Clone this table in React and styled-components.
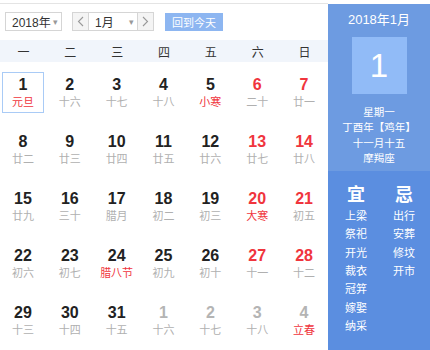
import React from 'react'
import styled, { createGlobalStyle } from 'styled-components'

const GlobalStyle = createGlobalStyle`
  html, body {
    margin: 0;
    padding: 0;
    background: #fff;
  }
  body {
    font-family: "Liberation Sans", "Noto Sans CJK SC", sans-serif;
  }
`

const weekdays = ['一', '二', '三', '四', '五', '六', '日']

const lunar = [
  '元旦', '十六', '十七', '十八', '小寒', '二十', '廿一',
  '廿二', '廿三', '廿四', '廿五', '廿六', '廿七', '廿八',
  '廿九', '三十', '腊月', '初二', '初三', '大寒', '初五',
  '初六', '初七', '腊八节', '初九', '初十', '十一', '十二',
  '十三', '十四', '十五', '十六', '十七', '十八', '立春'
]
const festivals = ['元旦', '小寒', '大寒', '腊八节', '立春']

const days = lunar.map((text, i) => {
  const inMonth = i < 31
  return {
    key: `day-${i}`,
    num: inMonth ? i + 1 : i - 30,
    text,
    inMonth,
    weekend: i % 7 >= 5,
    festival: festivals.includes(text),
    today: i === 0
  }
})

const yi = ['上梁', '祭祀', '开光', '裁衣', '冠笄', '嫁娶', '纳采']
const ji = ['出行', '安葬', '修坟', '开市']

const Chevron = ({ dir }) => (
  <svg width="7" height="11" viewBox="0 0 7 11">
    <path
      d={dir === 'left' ? 'M6 1 L1.5 5.5 L6 10' : 'M1 1 L5.5 5.5 L1 10'}
      fill="none"
      stroke="#999"
      strokeWidth="1.1"
    />
  </svg>
)

const App = () => (
  <>
    <GlobalStyle />
    <Page>
      <Main>
        <Toolbar>
          <Select width={57}>
            2018年
            <Caret>▾</Caret>
          </Select>
          <MonthGroup>
            <StepButton><Chevron dir="left" /></StepButton>
            <Select width={48} joined>
              1月
              <Caret>▾</Caret>
            </Select>
            <StepButton><Chevron dir="right" /></StepButton>
          </MonthGroup>
          <TodayButton>回到今天</TodayButton>
        </Toolbar>
        <WeekHeader>
          {weekdays.map(w => <WeekName key={w}>{w}</WeekName>)}
        </WeekHeader>
        <DayGrid>
          {days.map(d => (
            <DayCell key={d.key} today={d.today}>
              <DayNum inMonth={d.inMonth} weekend={d.weekend}>{d.num}</DayNum>
              <Lunar festival={d.festival}>{d.text}</Lunar>
            </DayCell>
          ))}
        </DayGrid>
      </Main>
      <Side>
        <SideTop>
          <SideTitle>2018年1月</SideTitle>
          <BigDay>1</BigDay>
          <SideInfo>
            <div>星期一</div>
            <div>丁酉年【鸡年】</div>
            <div>十一月十五</div>
            <div>摩羯座</div>
          </SideInfo>
        </SideTop>
        <Almanac>
          <AlmanacCol>
            <AlmanacHead>宜</AlmanacHead>
            {yi.map(t => <AlmanacItem key={t}>{t}</AlmanacItem>)}
          </AlmanacCol>
          <AlmanacCol>
            <AlmanacHead>忌</AlmanacHead>
            {ji.map(t => <AlmanacItem key={t}>{t}</AlmanacItem>)}
          </AlmanacCol>
        </Almanac>
      </Side>
    </Page>
  </>
)

const Page = styled.div`
  display: flex;
  width: 430px;
  height: 347px;
  margin-top: 3px;
  overflow: hidden;
`

const Main = styled.div`
  width: 328px;
  border-top: 1px solid #e4e4e4;
  display: flex;
  flex-direction: column;
`

const Toolbar = styled.div`
  display: flex;
  align-items: center;
  height: 19px;
  padding: 8px 0 0 5px;
`

const Select = styled.div`
  box-sizing: border-box;
  width: ${p => p.width}px;
  height: 19px;
  border: 1px solid #d5d5d5;
  background: #fff;
  display: flex;
  align-items: center;
  justify-content: space-between;
  padding: 0 3px 0 6px;
  font-size: 12px;
  color: #333;
  ${p => p.joined && 'border-left: none; border-right: none;'}
`

const Caret = styled.span`
  font-size: 9px;
  color: #999;
`

const MonthGroup = styled.div`
  display: flex;
  margin-left: 10px;
`

const StepButton = styled.div`
  box-sizing: border-box;
  width: 17px;
  height: 19px;
  border: 1px solid #d5d5d5;
  background: #f4f4f4;
  display: flex;
  align-items: center;
  justify-content: center;
`

const TodayButton = styled.div`
  width: 58px;
  height: 18px;
  margin-left: 11px;
  background: #8db6f1;
  color: #fff;
  font-size: 11px;
  display: flex;
  align-items: center;
  justify-content: center;
  font-family: "Noto Sans CJK SC", sans-serif;
`

const WeekHeader = styled.div`
  display: grid;
  grid-template-columns: repeat(7, 1fr);
  height: 22px;
  margin-top: 9px;
  background: #f1f5fb;
`

const WeekName = styled.div`
  display: flex;
  align-items: center;
  justify-content: center;
  font-size: 12px;
  color: #333;
  font-family: "Noto Sans CJK SC", sans-serif;
`

const DayGrid = styled.div`
  display: grid;
  grid-template-columns: repeat(7, 1fr);
  grid-auto-rows: 57px;
  margin-top: 2px;
`

const DayCell = styled.div`
  box-sizing: border-box;
  margin: 8px 3px 8px 2px;
  border: 1px solid ${p => (p.today ? '#a9cbf6' : 'transparent')};
  display: flex;
  flex-direction: column;
  align-items: center;
  justify-content: center;
`

const DayNum = styled.div`
  font-size: 16px;
  font-weight: bold;
  line-height: 17px;
  color: ${p => (!p.inMonth ? '#b4b4b4' : p.weekend ? '#f0353d' : '#222')};
`

const Lunar = styled.div`
  font-size: 11px;
  line-height: 16px;
  color: ${p => (p.festival ? '#f0353d' : '#b0b0b0')};
  font-family: "Noto Sans CJK SC", sans-serif;
`

const Side = styled.div`
  flex: 1;
  margin-top: 1px;
  display: flex;
  flex-direction: column;
  color: #fff;
  font-family: "Noto Sans CJK SC", sans-serif;
`

const SideTop = styled.div`
  background: #6d9be1;
  display: flex;
  flex-direction: column;
  align-items: center;
  padding: 8px 0 6px;
`

const SideTitle = styled.div`
  font-size: 13px;
  line-height: 16px;
  font-family: "Liberation Sans", "Noto Sans CJK SC", sans-serif;
`

const BigDay = styled.div`
  width: 55px;
  height: 57px;
  margin-top: 9px;
  background: #91bbf7;
  display: flex;
  align-items: center;
  justify-content: center;
  font-size: 33px;
  font-family: "Liberation Sans", sans-serif;
`

const SideInfo = styled.div`
  margin-top: 10px;
  font-size: 10.5px;
  line-height: 15.3px;
  text-align: center;
`

const Almanac = styled.div`
  flex: 1;
  background: #5b8ee0;
  display: grid;
  grid-template-columns: 1fr 1fr;
  padding: 11px 2px 0 4px;
  align-content: start;
`

const AlmanacCol = styled.div`
  display: flex;
  flex-direction: column;
  align-items: center;
`

const AlmanacHead = styled.div`
  font-size: 18px;
  font-weight: bold;
  line-height: 22px;
  margin-bottom: 2px;
`

const AlmanacItem = styled.div`
  font-size: 11px;
  line-height: 18.3px;
`

export default App
